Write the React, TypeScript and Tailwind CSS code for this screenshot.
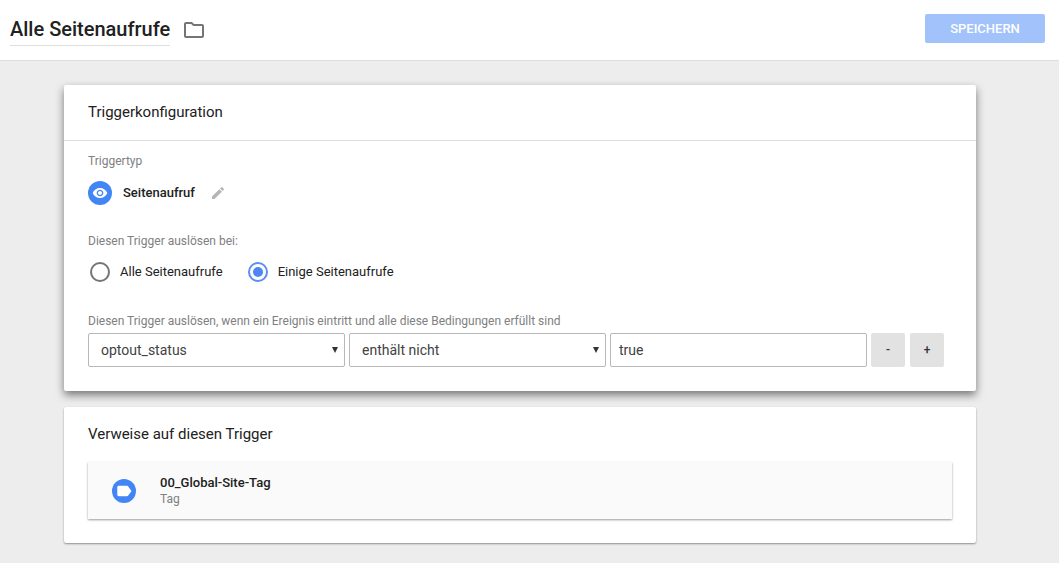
import { useState } from "react";
import type { ReactNode } from "react";

const iconPaths = {
  folder:
    "M9.17 6l2 2H20v10H4V6h5.17M10 4H4c-1.1 0-1.99.9-1.99 2L2 18c0 1.1.9 2 2 2h16c1.1 0 2-.9 2-2V8c0-1.1-.9-2-2-2h-8l-2-2z",
  eye: "M12 4.5C7 4.5 2.73 7.61 1 12c1.73 4.39 6 7.5 11 7.5s9.27-3.11 11-7.5c-1.73-4.39-6-7.5-11-7.5zM12 17c-2.76 0-5-2.24-5-5s2.24-5 5-5 5 2.24 5 5-2.24 5-5 5zm0-8c-1.66 0-3 1.34-3 3s1.34 3 3 3 3-1.34 3-3-1.34-3-3-3z",
  pencil:
    "M3 17.25V21h3.75L17.81 9.94l-3.75-3.75L3 17.25zM20.71 7.04c.39-.39.39-1.02 0-1.41l-2.34-2.34c-.39-.39-1.02-.39-1.41 0l-1.83 1.83 3.75 3.75 1.83-1.83z",
  label:
    "M17.63 5.84C17.27 5.33 16.67 5 16 5L5 5.01C3.9 5.01 3 5.9 3 7v10c0 1.1.9 1.99 2 1.99L16 19c.67 0 1.27-.33 1.63-.84L22 12l-4.37-6.16z",
};

function Icon({ name, className }: { name: keyof typeof iconPaths; className: string }) {
  return (
    <svg viewBox="0 0 24 24" fill="currentColor" aria-hidden="true" className={className}>
      <path d={iconPaths[name]} />
    </svg>
  );
}

function Badge({ children }: { children: ReactNode }) {
  return (
    <span className="flex size-6 shrink-0 items-center justify-center rounded-full bg-[#4285f4] text-white">
      {children}
    </span>
  );
}

function Radio({
  label,
  checked,
  onChange,
}: {
  label: string;
  checked: boolean;
  onChange: () => void;
}) {
  return (
    <label className="flex cursor-pointer items-center gap-2.5 text-[13px] leading-5 text-[#212121]">
      <input
        type="radio"
        name="fire-on"
        checked={checked}
        onChange={onChange}
        className="size-5 appearance-none rounded-full border-2 border-[#757575] bg-clip-content p-[3px] checked:border-[#5c8ff0] checked:bg-[#4f86f2]"
      />
      {label}
    </label>
  );
}

function Select({ label, options }: { label: string; options: string[] }) {
  return (
    <div className="relative">
      <select
        aria-label={label}
        className="h-[34px] w-full appearance-none rounded-xs border border-[#b8b8b8] bg-white pr-6 pl-3 text-sm text-[#424242]"
      >
        {options.map((option) => (
          <option key={option}>{option}</option>
        ))}
      </select>
      <svg
        viewBox="0 0 6 6"
        aria-hidden="true"
        className="pointer-events-none absolute top-3.5 right-[7px] size-1.5 fill-[#333333]"
      >
        <path d="M0 0h6L3 6z" />
      </svg>
    </div>
  );
}

const squareButton =
  "flex size-[34px] shrink-0 items-center justify-center rounded-xs bg-[#e2e2e2] text-xs font-medium text-[#333333]";

export default function App() {
  const [all, setAll] = useState(false);

  return (
    <div className="min-h-screen bg-[#ededed] font-[Roboto,sans-serif] text-[#212121]">
      <header className="flex h-[61px] items-start justify-between border-b border-[#dedede] bg-white pr-3.5 pl-2.5">
        <div className="flex items-center gap-3 pt-3.5">
          <h1 className="border-b border-[#dedede] pb-px text-xl leading-[30px] font-medium">
            Alle Seitenaufrufe
          </h1>
          <button type="button" aria-label="Ordner" className="text-[#757575]">
            <Icon name="folder" className="size-6" />
          </button>
        </div>
        <button
          type="button"
          className="mt-3.5 h-[29px] w-30 rounded-xs bg-[#a1c2fa] text-[13px] font-medium text-white"
        >
          SPEICHERN
        </button>
      </header>

      <main className="flex flex-col gap-4 pt-6 pr-[83px] pb-5 pl-16">
        <section className="rounded-xs bg-white shadow-[0_4px_8px_rgba(0,0,0,0.5)]">
          <h2 className="border-b border-[#dedede] px-6 py-4 text-[15px] leading-[23px]">
            Triggerkonfiguration
          </h2>
          <div className="px-6 pt-3 pb-6">
            <p className="text-xs leading-4 text-[#808080]">Triggertyp</p>
            <div className="flex items-center gap-[11px] pt-3">
              <Badge>
                <Icon name="eye" className="size-4" />
              </Badge>
              <span className="text-[13px] leading-5 font-medium">Seitenaufruf</span>
              <button type="button" aria-label="Bearbeiten" className="ml-1 text-[#b5b5b5]">
                <Icon name="pencil" className="size-4" />
              </button>
            </div>

            <fieldset className="pt-7">
              <legend className="contents text-xs leading-4 text-[#808080]">
                <span className="block">Diesen Trigger auslösen bei:</span>
              </legend>
              <div className="flex gap-[25px] pt-[13px] pl-0.5">
                <Radio label="Alle Seitenaufrufe" checked={all} onChange={() => setAll(true)} />
                <Radio label="Einige Seitenaufrufe" checked={!all} onChange={() => setAll(false)} />
              </div>
            </fieldset>

            <p className="pt-[31px] text-xs leading-4 text-[#808080]">
              Diesen Trigger auslösen, wenn ein Ereignis eintritt und alle diese Bedingungen erfüllt
              sind
            </p>
            <div className="flex gap-1 pt-1 pr-2">
              <div className="grid flex-1 grid-cols-3 gap-1">
                <Select label="Variable" options={["optout_status"]} />
                <Select label="Operator" options={["enthält nicht", "enthält"]} />
                <input
                  aria-label="Wert"
                  defaultValue="true"
                  className="h-[34px] w-full rounded-xs border border-[#b8b8b8] bg-white px-2 text-sm text-[#424242]"
                />
              </div>
              <div className="flex gap-[5px]">
                <button type="button" aria-label="Bedingung entfernen" className={squareButton}>
                  -
                </button>
                <button type="button" aria-label="Bedingung hinzufügen" className={squareButton}>
                  +
                </button>
              </div>
            </div>
          </div>
        </section>

        <section className="rounded-xs bg-white px-6 pt-4 pb-6 shadow-[0_1px_2px_rgba(0,0,0,0.4)]">
          <h2 className="text-[15px] leading-[23px]">Verweise auf diesen Trigger</h2>
          <a
            href="#tag"
            className="mt-4 flex h-[57px] items-center gap-6 bg-[#fafafa] px-6 shadow-[0_1px_2px_rgba(0,0,0,0.4)]"
          >
            <Badge>
              <Icon name="label" className="size-[18px]" />
            </Badge>
            <span className="flex flex-col leading-4">
              <span className="text-[13px] font-medium">00_Global-Site-Tag</span>
              <span className="text-xs leading-4 text-[#808080]">Tag</span>
            </span>
          </a>
        </section>
      </main>
    </div>
  );
}
